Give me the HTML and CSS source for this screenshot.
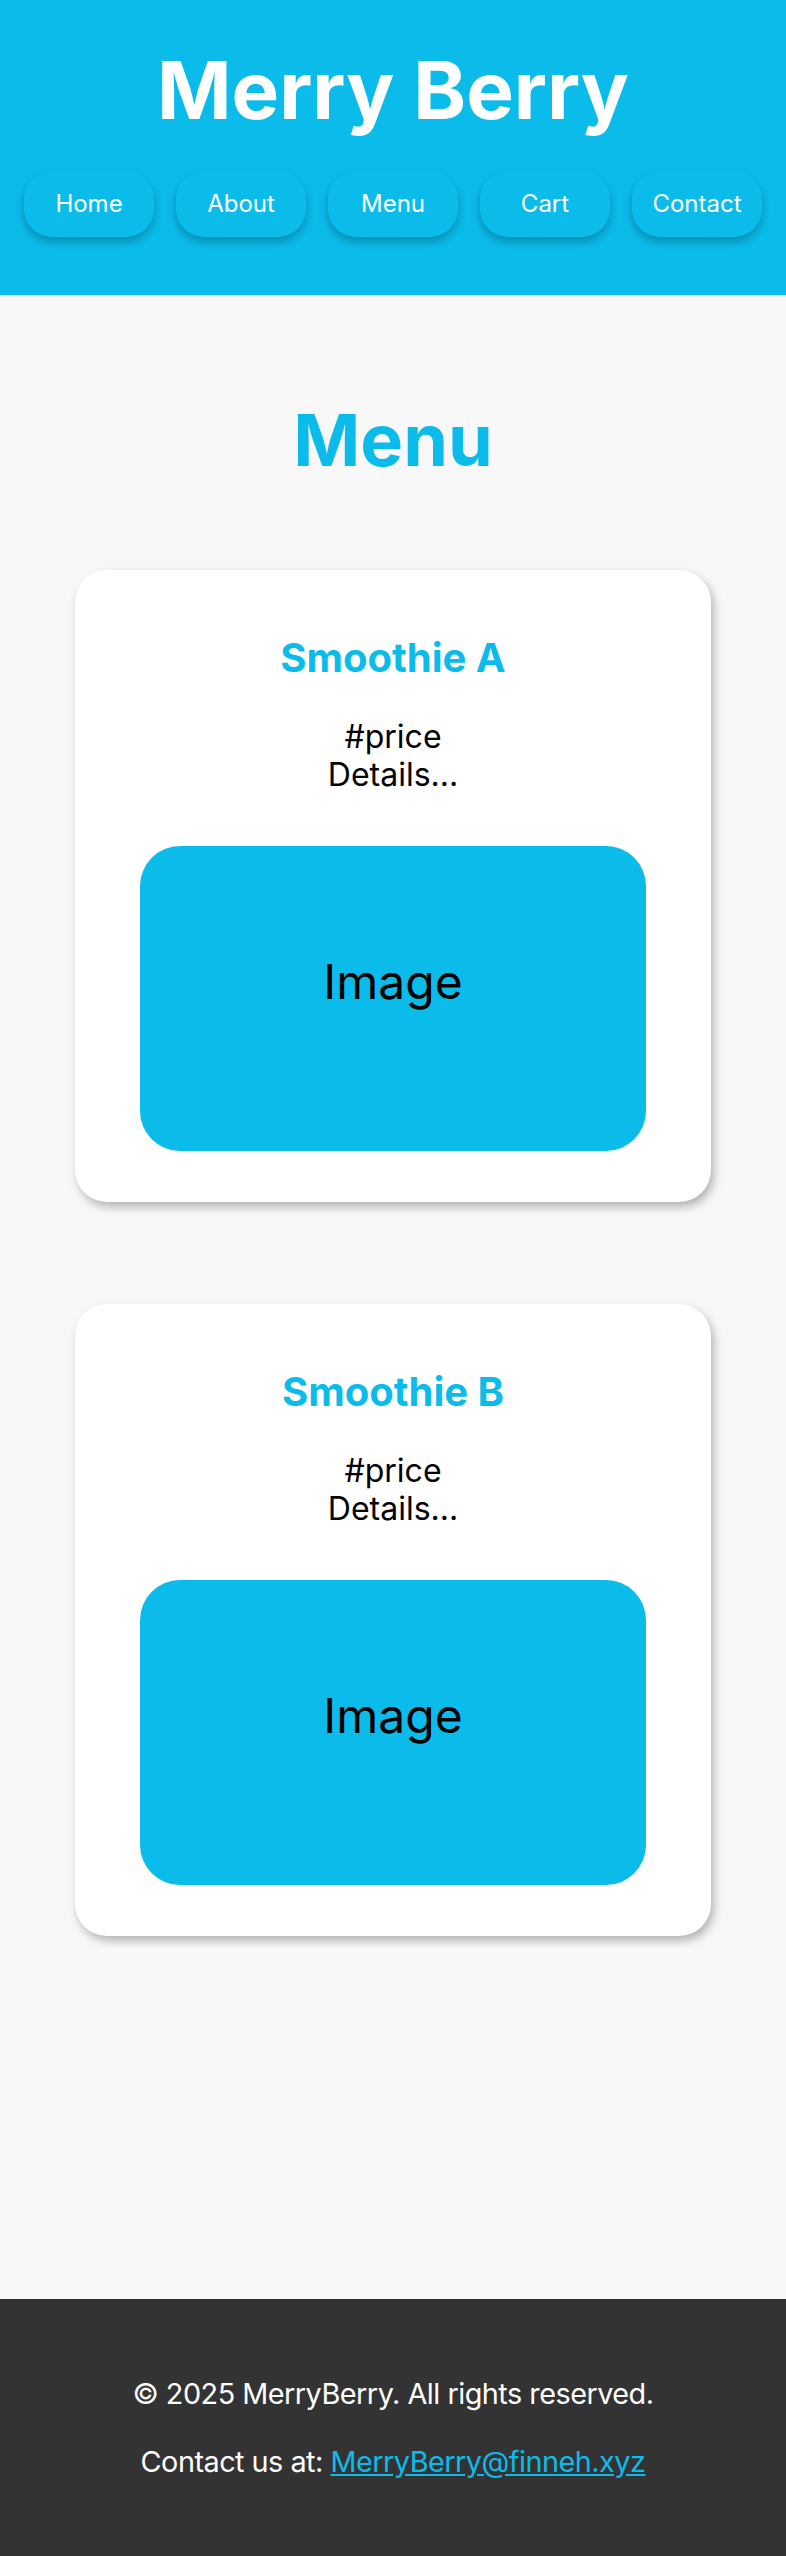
FILE: index.html
```html
<!DOCTYPE html>
<html lang="en">
<head>
<meta charset="utf-8">
<title>Merry Berry - Menu</title>
<link rel="stylesheet" href="styles.css">
</head>
<body>
<header class="site-header">
  <h1 class="brand">Merry Berry</h1>
  <nav class="nav">
    <a class="nav-btn" href="#">Home</a>
    <a class="nav-btn" href="#">About</a>
    <a class="nav-btn" href="#">Menu</a>
    <a class="nav-btn" href="#">Cart</a>
    <a class="nav-btn" href="#">Contact</a>
  </nav>
</header>
<main class="main">
  <h1 class="page-title">Menu</h1>
  <section class="cards">
    <article class="card">
      <h2 class="card-title">Smoothie A</h2>
      <p class="card-text">#price<br>Details...</p>
      <div class="card-image">Image</div>
    </article>
    <article class="card">
      <h2 class="card-title">Smoothie B</h2>
      <p class="card-text">#price<br>Details...</p>
      <div class="card-image">Image</div>
    </article>
  </section>
</main>
<footer class="site-footer">
  <p class="footer-line">© 2025 MerryBerry. All rights reserved.</p>
  <p class="footer-line">Contact us at: <a class="footer-link" href="#">MerryBerry@finneh.xyz</a></p>
</footer>
</body>
</html>
```
FILE: styles.css
```css
* { box-sizing: border-box; }
html, body { margin: 0; padding: 0; }
body {
  font-family: Inter, "Noto Sans", "Liberation Sans", sans-serif;
  background: #f8f8f8;
  color: #000;
}
.site-header {
  background: #0bbceb;
  padding: 41px 24px 58px;
  text-align: center;
}
.brand {
  margin: 0 0 32px;
  font-size: 80px;
  font-weight: 700;
  line-height: 97px;
  color: #fff;
}
.nav {
  display: flex;
  justify-content: center;
  gap: 22px;
}
.nav-btn {
  width: 130px;
  height: 67px;
  display: flex;
  align-items: center;
  justify-content: center;
  background: #0bbceb;
  color: #fff;
  text-decoration: none;
  font-size: 24px;
  border-radius: 28px;
  box-shadow: 0 5px 10px rgba(0, 0, 0, 0.25);
}
.main {
  padding: 101px 0 363px;
}
.page-title {
  margin: 0 0 87px;
  text-align: center;
  font-size: 72px;
  font-weight: 700;
  line-height: 87px;
  color: #0bbceb;
}
.cards {
  display: flex;
  flex-direction: column;
  align-items: center;
  gap: 102px;
}
.card {
  width: 636px;
  background: #fff;
  border-radius: 32px;
  padding: 64px 65px 51px;
  box-shadow: 3px 5px 10px rgba(0, 0, 0, 0.28);
  text-align: center;
}
.card-title {
  margin: 0 0 36px;
  font-size: 40px;
  font-weight: 700;
  line-height: 48px;
  color: #0bbceb;
}
.card-text {
  margin: 0 0 51px;
  font-size: 32px;
  line-height: 38.4px;
}
.card-image {
  height: 305px;
  background: #0bbceb;
  border-radius: 40px;
  padding-top: 107px;
  font-size: 48px;
  line-height: 58px;
}
.site-footer {
  background: #333;
  color: #fff;
  padding: 75px 20px;
  display: flex;
  flex-direction: column;
  align-items: center;
  gap: 28px;
}
.footer-line {
  margin: 0;
  font-size: 28.8px;
  line-height: 40px;
  letter-spacing: -0.5px;
  text-align: center;
}
.footer-link {
  color: #0bbceb;
}
```
